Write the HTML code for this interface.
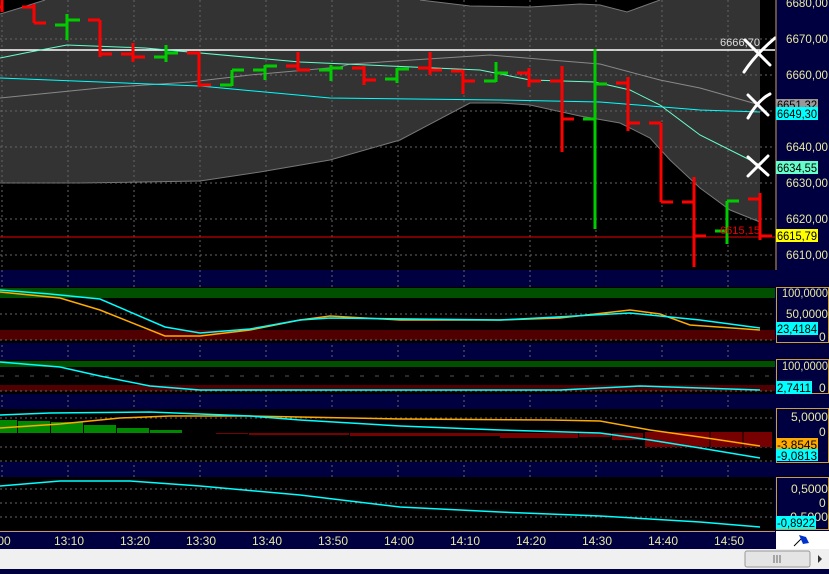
<!DOCTYPE html><html><head><style>body{margin:0;background:#000040;width:829px;height:569px;overflow:hidden;font-family:"Liberation Sans",sans-serif}</style></head><body>
<svg width="829" height="569" xmlns="http://www.w3.org/2000/svg" font-family="Liberation Sans" font-size="11">
<rect width="829" height="569" fill="#000040"/>
<rect x="0" y="0" width="775" height="270" fill="#000"/>
<polygon fill="#333" points="0,14 20,8 45,0 420,0 470,6 530,7 580,4 600,5 627,12 660,0 760,0 760,222 730,210 700,188 670,160 650,138 620,123 580,116 530,105 500,103 470,103 400,140 330,160 260,172 200,181 80,183 0,183"/>
<polyline fill="none" stroke="#777" points="0,14 20,8 45,0"/>
<polyline fill="none" stroke="#777" points="420,0 470,6 530,7 580,4 600,5 627,12 660,0"/>
<polyline fill="none" stroke="#777" points="0,183 80,183 200,181 260,172 330,160 400,140 470,103 500,103 530,105 580,116 620,123 650,138 670,160 700,188 730,210 760,222"/>
<g stroke="#666" stroke-dasharray="2,3">
<line x1="0" y1="39" x2="775" y2="39"/><line x1="0" y1="75" x2="775" y2="75"/><line x1="0" y1="111" x2="775" y2="111"/><line x1="0" y1="147" x2="775" y2="147"/><line x1="0" y1="183" x2="775" y2="183"/><line x1="0" y1="219" x2="775" y2="219"/><line x1="0" y1="255" x2="775" y2="255"/>
<line x1="2" y1="0" x2="2" y2="530"/><line x1="68" y1="0" x2="68" y2="530"/><line x1="134" y1="0" x2="134" y2="530"/><line x1="200" y1="0" x2="200" y2="530"/><line x1="266" y1="0" x2="266" y2="530"/><line x1="332" y1="0" x2="332" y2="530"/><line x1="398" y1="0" x2="398" y2="530"/><line x1="464" y1="0" x2="464" y2="530"/><line x1="530" y1="0" x2="530" y2="530"/><line x1="596" y1="0" x2="596" y2="530"/><line x1="662" y1="0" x2="662" y2="530"/><line x1="728" y1="0" x2="728" y2="530"/>
</g>
<line x1="0" y1="50" x2="775" y2="50" stroke="#fff" stroke-width="1.5"/>
<line x1="0" y1="237" x2="775" y2="237" stroke="#e00"/>
<polyline fill="none" stroke="#888" points="0,98 100,88 190,82 250,75 340,67 350,64 490,55 550,60 600,64 660,80 700,88 760,105"/>
<polyline fill="none" stroke="#0ff" points="0,78 100,82 200,86 330,98 500,100 600,102 700,110 760,112"/>
<polyline fill="none" stroke="#6fc" points="0,58 30,52 67,45 145,48 300,62 480,70 530,80 595,82 630,90 660,105 700,135 760,165"/>
<g stroke-width="3" fill="none">
<g stroke="#f00"><path d="M2 0V12M-10 7H2"/><path d="M34 4V23M22 7H34M34 23H46"/><path d="M100 20V57M88 20H100M100 54H112"/><path d="M133 43V62M121 54H133M133 57H145"/><path d="M199 52V87M187 53H199M199 85H211"/><path d="M298 52V71M286 66H298M298 70H310"/><path d="M364 66V85M352 68H364M364 80H376"/><path d="M430 52V75M418 68H430M430 70H442"/><path d="M463 70V94M451 71H463M463 81H475"/><path d="M529 68V87M517 73H529M529 81H541"/><path d="M562 66V152M550 81H562M562 119H574"/><path d="M628 77V131M616 83H628M628 123H640"/><path d="M661 123V202M649 123H661M661 202H673"/><path d="M694 177V267M682 202H694M694 236H706"/><path d="M760 193V240M748 199H760M760 236H772"/></g>
<g stroke="#0c0"><path d="M67 14V40M55 25H67M67 20H80"/><path d="M166 45V62M154 57H166M166 53H178"/><path d="M232 70V86M220 85H232M232 70H244"/><path d="M265 65V80M253 70H265M265 66H277"/><path d="M331 65V81M319 70H331M331 68H343"/><path d="M397 68V83M385 79H397M397 69H409"/><path d="M496 62V82M484 81H496M496 73H508"/><path d="M595 49V229M583 119H595M595 84H607"/><path d="M727 201V244M715 231H727M727 201H739"/></g>
</g>
<text x="720" y="46" fill="#ddd" textLength="40" lengthAdjust="spacingAndGlyphs">6666,70</text>
<text x="720" y="234" fill="#e00" textLength="40" lengthAdjust="spacingAndGlyphs">6615,15</text>
<g stroke="#fff" stroke-width="3" fill="none" stroke-linecap="round">
<path d="M745 40Q760 55 770 65M744 72Q755 55 775 38"/><path d="M748 95L768 115M748 118Q758 100 770 94"/><path d="M748 157L768 175M748 176L768 156"/></g>
<rect x="0" y="287" width="775" height="56" fill="#000"/>
<rect x="0" y="288" width="775" height="10" fill="#005000"/><rect x="0" y="330" width="775" height="10" fill="#500000"/>
<rect x="0" y="360" width="775" height="34" fill="#000"/>
<rect x="0" y="361" width="775" height="6" fill="#005000"/><rect x="0" y="385" width="775" height="6" fill="#500000"/>
<rect x="0" y="409" width="775" height="53" fill="#000"/>
<rect x="0" y="477" width="775" height="53" fill="#000"/>
<g stroke="#666" stroke-dasharray="2,3"><line x1="0" y1="314" x2="775" y2="314"/><line x1="0" y1="340" x2="775" y2="340"/><line x1="0" y1="391" x2="775" y2="391"/><line x1="0" y1="418" x2="775" y2="418"/><line x1="0" y1="447" x2="775" y2="447"/><line x1="0" y1="461" x2="775" y2="461"/><line x1="0" y1="489" x2="775" y2="489"/><line x1="0" y1="503" x2="775" y2="503"/><line x1="0" y1="517" x2="775" y2="517"/></g>
<line x1="0" y1="376" x2="775" y2="376" stroke="#555" stroke-dasharray="4,11"/>
<g fill="#080"><rect x="0" y="420" width="17" height="13"/><rect x="18" y="421" width="32" height="12"/><rect x="51" y="422" width="32" height="11"/><rect x="84" y="425" width="32" height="8"/><rect x="117" y="428" width="32" height="5"/><rect x="150" y="430" width="32" height="3"/></g>
<g fill="#700"><rect x="216" y="433" width="32" height="1"/><rect x="249" y="433" width="100" height="2"/><rect x="350" y="433" width="150" height="3"/><rect x="500" y="433" width="78" height="5"/><rect x="579" y="433" width="32" height="4"/><rect x="612" y="433" width="31" height="7"/><rect x="645" y="432" width="127" height="15"/></g>
<g stroke="#000" stroke-width="1"><line x1="710" y1="432" x2="710" y2="447"/><line x1="743" y1="432" x2="743" y2="447"/></g>
<g fill="none" stroke-width="1.5">
<polyline stroke="#fa0" points="0,292 60,298 100,310 165,336 200,336 250,330 300,320 330,316 400,320 500,320 560,318 630,310 660,314 690,325 760,330"/>
<polyline stroke="#0ff" points="0,290 50,294 100,299 165,327 200,333 250,329 300,320 330,318 500,320 630,313 700,320 760,328"/>
<polyline stroke="#0ff" points="0,362 60,367 100,376 150,386 200,390 560,390 600,388 640,386 700,388 760,390"/>
<polyline stroke="#fa0" points="0,428 60,424 120,418 170,416 250,416 400,419 550,420 600,421 650,430 700,437 760,446"/>
<polyline stroke="#0ff" points="0,415 50,413 150,412 250,416 300,420 400,426 500,430 600,433 650,440 700,448 760,458"/>
<polyline stroke="#0ff" points="0,486 60,481 130,481 200,486 300,495 400,507 500,512 600,516 700,522 760,527"/>
</g>
<g fill="none" stroke="#c8a040"><line x1="776" y1="0" x2="776" y2="270"/><rect x="776.5" y="287.5" width="52" height="55"/><rect x="776.5" y="359.5" width="52" height="34"/><rect x="776.5" y="408.5" width="52" height="54"/><rect x="776.5" y="477.5" width="52" height="52"/><line x1="0" y1="531.5" x2="775" y2="531.5"/></g>
<g fill="#e8e8a0" font-size="12" lengthAdjust="spacingAndGlyphs"><text x="786" y="7" textLength="42" lengthAdjust="spacingAndGlyphs">6680,00</text><text x="786" y="43" textLength="42" lengthAdjust="spacingAndGlyphs">6670,00</text><text x="786" y="79" textLength="42" lengthAdjust="spacingAndGlyphs">6660,00</text><text x="786" y="151" textLength="42" lengthAdjust="spacingAndGlyphs">6640,00</text><text x="786" y="187" textLength="42" lengthAdjust="spacingAndGlyphs">6630,00</text><text x="786" y="223" textLength="42" lengthAdjust="spacingAndGlyphs">6620,00</text><text x="786" y="259" textLength="42" lengthAdjust="spacingAndGlyphs">6610,00</text>
<text x="782" y="297" textLength="46" lengthAdjust="spacingAndGlyphs">100,0000</text><text x="786" y="318" textLength="42" lengthAdjust="spacingAndGlyphs">50,0000</text><text x="819" y="341">0</text><text x="782" y="370" textLength="46" lengthAdjust="spacingAndGlyphs">100,0000</text><text x="819" y="392">0</text><text x="791" y="421" textLength="37" lengthAdjust="spacingAndGlyphs">5,0000</text><text x="819" y="436">0</text><text x="791" y="493" textLength="37" lengthAdjust="spacingAndGlyphs">0,5000</text><text x="819" y="507">0</text><text x="786" y="521" textLength="42" lengthAdjust="spacingAndGlyphs">-0,5000</text></g>
<g font-size="12"><rect x="776" y="99" width="42" height="12" fill="#999"/><text x="777" y="109" textLength="40" lengthAdjust="spacingAndGlyphs">6651,32</text>
<rect x="776" y="107" width="42" height="13" fill="#0ff"/><text x="777" y="118" textLength="40" lengthAdjust="spacingAndGlyphs">6649,30</text>
<rect x="776" y="161" width="42" height="13" fill="#6fc"/><text x="777" y="172" textLength="40" lengthAdjust="spacingAndGlyphs">6634,55</text>
<rect x="776" y="229" width="42" height="13" fill="#ff0"/><text x="777" y="240" textLength="40" lengthAdjust="spacingAndGlyphs">6615,79</text>
<rect x="776" y="322" width="42" height="13" fill="#0ff"/><text x="777" y="333" textLength="40" lengthAdjust="spacingAndGlyphs">23,4184</text>
<rect x="776" y="381" width="36" height="13" fill="#0ff"/><text x="777" y="392" textLength="34" lengthAdjust="spacingAndGlyphs">2,7411</text>
<rect x="776" y="438" width="42" height="13" fill="#fa0"/><text x="777" y="449" textLength="40" lengthAdjust="spacingAndGlyphs">-3,8545</text>
<rect x="776" y="449" width="42" height="12" fill="#0ff"/><text x="777" y="460" textLength="40" lengthAdjust="spacingAndGlyphs">-9,0813</text>
<rect x="776" y="516" width="40" height="13" fill="#0ff"/><text x="777" y="527" textLength="38" lengthAdjust="spacingAndGlyphs">-0,8922</text></g>
<g fill="#e8e8a0" font-size="12"><text x="-6" y="545">:00</text><text x="54" y="545">13:10</text><text x="120" y="545">13:20</text><text x="186" y="545">13:30</text><text x="252" y="545">13:40</text><text x="318" y="545">13:50</text><text x="384" y="545">14:00</text><text x="450" y="545">14:10</text><text x="516" y="545">14:20</text><text x="582" y="545">14:30</text><text x="648" y="545">14:40</text><text x="714" y="545">14:50</text></g>
<rect x="776" y="531" width="53" height="18" fill="#fff"/>
<path d="M794 546L803 537" stroke="#000"/><path d="M799 535L806 537L809 543L803 544Z" fill="#03c"/>
<rect x="0" y="549" width="829" height="20" fill="#f0f0f0"/>
<rect x="745" y="551" width="65" height="16" rx="2" fill="#e4e4e4" stroke="#999"/>
<path d="M774 555v8M777 555v8M780 555v8" stroke="#666"/>
<path d="M818 555l4 4-4 4z" fill="#333"/>
</svg></body></html>
